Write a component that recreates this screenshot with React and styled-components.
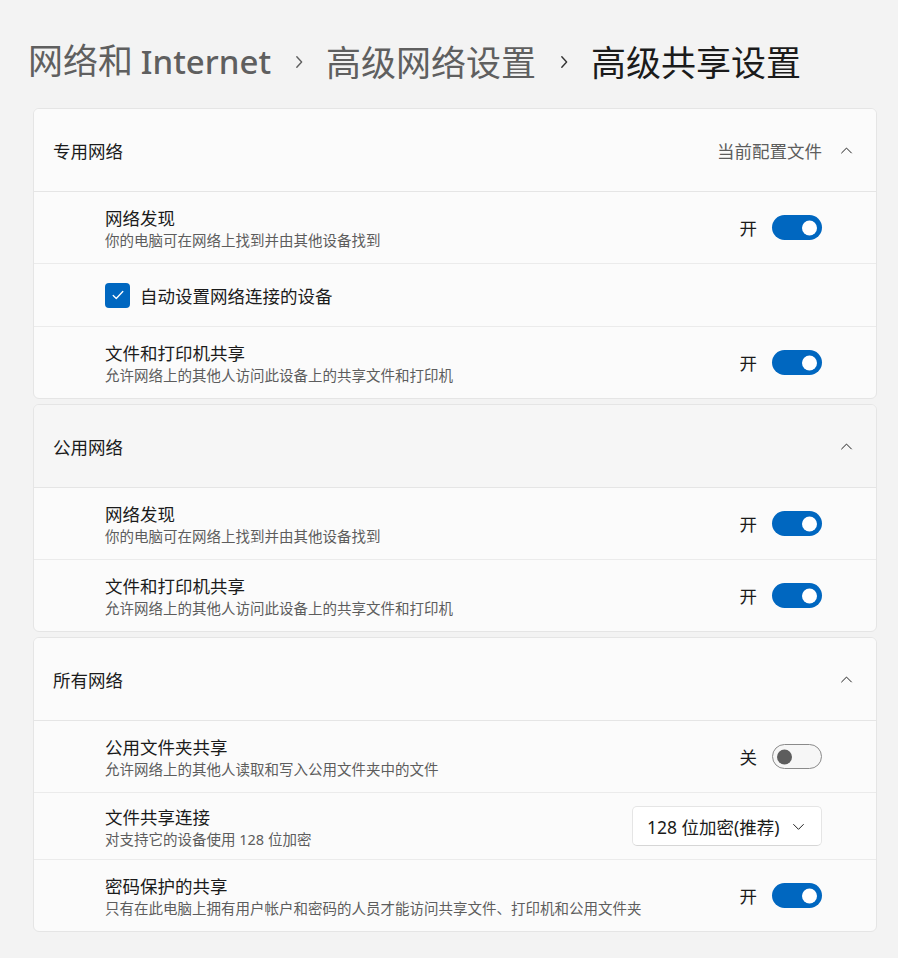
import styled, { createGlobalStyle } from "styled-components";

const GlobalStyle = createGlobalStyle`
  body {
    margin: 0;
    background: #f3f3f3;
    font-family: "Segoe UI", "Noto Sans", "Noto Sans CJK SC", sans-serif;
    color: #1b1b1b;
  }
`;

const Page = styled.div`
  padding: 34px 21px 28px 33px;
  display: flex;
  flex-direction: column;
`;

const Breadcrumb = styled.div`
  display: flex;
  align-items: center;
  height: 53px;
  margin-left: -5px;
  margin-bottom: 21px;
  font-family: "Noto Sans CJK SC", "Noto Sans", sans-serif;
  font-size: 35px;
  line-height: 50px;
`;

const Crumb = styled.span`
  color: ${(p) => (p.$current ? "#1b1b1b" : "#5f5f5f")};
  white-space: nowrap;
`;

const Latin = styled.span`
  font-family: "Noto Sans", sans-serif;
  font-weight: 500;
  font-size: 33px;
`;

const CrumbSep = styled.span`
  display: flex;
  align-items: center;
  justify-content: center;
  width: 55px;
  padding-top: 2px;
`;

const Cards = styled.div`
  display: flex;
  flex-direction: column;
  gap: 5px;
`;

const Card = styled.section`
  background: #fbfbfb;
  border: 1px solid #e5e5e5;
  border-radius: 6px;
  overflow: hidden;
`;

const Header = styled.div`
  height: 82px;
  display: flex;
  align-items: center;
  padding: 0 23px 0 19px;
  background: ${(p) => (p.$hover ? "#f6f6f6" : "#fbfbfb")};
  border-bottom: 1px solid #e5e5e5;
  font-size: 17.5px;
`;

const HeaderTitle = styled.span`
  flex: 1;
`;

const HeaderNote = styled.span`
  color: #5d5d5d;
  font-size: 17.5px;
  margin-right: 18px;
`;

const Row = styled.div`
  height: ${(p) => p.$h || 71}px;
  display: flex;
  align-items: center;
  padding: 0 54px 0 71px;
  border-top: ${(p) => (p.$first ? "none" : "1px solid #ebebeb")};
`;

const RowText = styled.div`
  flex: 1;
  display: flex;
  flex-direction: column;
  padding-top: 3px;
`;

const RowTitle = styled.span`
  font-size: 17.5px;
  line-height: 22px;
`;

const RowDesc = styled.span`
  font-size: 14.5px;
  line-height: 22px;
  color: #5d5d5d;
`;

const StateLabel = styled.span`
  font-size: 17.5px;
  margin-right: 15px;
`;

const Track = styled.div`
  width: 50px;
  height: 25px;
  box-sizing: border-box;
  border-radius: 13px;
  position: relative;
  background: ${(p) => (p.$on ? "#0067c0" : "#f6f6f6")};
  border: ${(p) => (p.$on ? "none" : "1px solid #8a8a8a")};
`;

const Thumb = styled.div`
  position: absolute;
  top: 50%;
  width: 15px;
  height: 15px;
  border-radius: 50%;
  transform: translateY(-50%);
  background: ${(p) => (p.$on ? "#ffffff" : "#5d5d5d")};
  ${(p) => (p.$on ? "right: 5px;" : "left: 4px;")}
`;

const CheckBox = styled.div`
  width: 25px;
  height: 25px;
  border-radius: 4px;
  background: #0067c0;
  display: flex;
  align-items: center;
  justify-content: center;
  margin-right: 10px;
`;

const CheckLabel = styled.span`
  font-size: 17.5px;
`;

const Select = styled.div`
  width: 190px;
  height: 40px;
  box-sizing: border-box;
  background: #ffffff;
  border: 1px solid #e5e5e5;
  border-bottom-color: #d6d6d6;
  border-radius: 5px;
  display: flex;
  align-items: center;
  padding: 0 16px 0 14px;
  font-size: 17.5px;
`;

const SelectText = styled.span`
  flex: 1;
`;

const paths = {
  up: "M2 11 L8 5 L14 11",
  down: "M2 5.5 L8 11.5 L14 5.5",
  right: "M5.5 2 L11 8 L5.5 14",
};

const Chevron = ({ dir = "up", size = 13, color = "#1b1b1b", weight = 1.2 }) => (
  <svg width={size} height={size} viewBox="0 0 16 16" fill="none">
    <path d={paths[dir]} stroke={color} strokeWidth={weight} strokeLinecap="round" strokeLinejoin="round" />
  </svg>
);

function Toggle({ on }) {
  return (
    <>
      <StateLabel>{on ? "开" : "关"}</StateLabel>
      <Track $on={on}>
        <Thumb $on={on} />
      </Track>
    </>
  );
}

function SettingRow({ title, desc, on, first }) {
  return (
    <Row $first={first}>
      <RowText>
        <RowTitle>{title}</RowTitle>
        <RowDesc>{desc}</RowDesc>
      </RowText>
      <Toggle on={on} />
    </Row>
  );
}

function SectionHeader({ title, note, hover }) {
  return (
    <Header $hover={hover}>
      <HeaderTitle>{title}</HeaderTitle>
      {note && <HeaderNote>{note}</HeaderNote>}
      <Chevron dir="up" size={13} />
    </Header>
  );
}

const discovery = ["网络发现", "你的电脑可在网络上找到并由其他设备找到"];
const printing = ["文件和打印机共享", "允许网络上的其他人访问此设备上的共享文件和打印机"];

export default function App() {
  return (
    <>
      <GlobalStyle />
      <Page>
        <Breadcrumb>
          <Crumb>
            网络和 <Latin>Internet</Latin>
          </Crumb>
          <CrumbSep>
            <Chevron dir="right" size={14} color="#5f5f5f" weight={1.6} />
          </CrumbSep>
          <Crumb>高级网络设置</Crumb>
          <CrumbSep>
            <Chevron dir="right" size={14} color="#333333" weight={1.6} />
          </CrumbSep>
          <Crumb $current>高级共享设置</Crumb>
        </Breadcrumb>
        <Cards>
          <Card>
            <SectionHeader title="专用网络" note="当前配置文件" />
            <SettingRow first title={discovery[0]} desc={discovery[1]} on />
            <Row $h={62}>
              <CheckBox>
                <svg width="14" height="14" viewBox="0 0 16 16" fill="none">
                  <path d="M2.5 8.5 L6 12 L13.5 4" stroke="#fff" strokeWidth="1.5" strokeLinecap="round" strokeLinejoin="round" />
                </svg>
              </CheckBox>
              <CheckLabel>自动设置网络连接的设备</CheckLabel>
            </Row>
            <SettingRow title={printing[0]} desc={printing[1]} on />
          </Card>
          <Card>
            <SectionHeader title="公用网络" hover />
            <SettingRow first title={discovery[0]} desc={discovery[1]} on />
            <SettingRow title={printing[0]} desc={printing[1]} on />
          </Card>
          <Card>
            <SectionHeader title="所有网络" />
            <SettingRow first title="公用文件夹共享" desc="允许网络上的其他人读取和写入公用文件夹中的文件" on={false} />
            <Row $h={66}>
              <RowText>
                <RowTitle>文件共享连接</RowTitle>
                <RowDesc>对支持它的设备使用 128 位加密</RowDesc>
              </RowText>
              <Select>
                <SelectText>128 位加密(推荐)</SelectText>
                <Chevron dir="down" size={13} />
              </Select>
            </Row>
            <SettingRow title="密码保护的共享" desc="只有在此电脑上拥有用户帐户和密码的人员才能访问共享文件、打印机和公用文件夹" on />
          </Card>
        </Cards>
      </Page>
    </>
  );
}
